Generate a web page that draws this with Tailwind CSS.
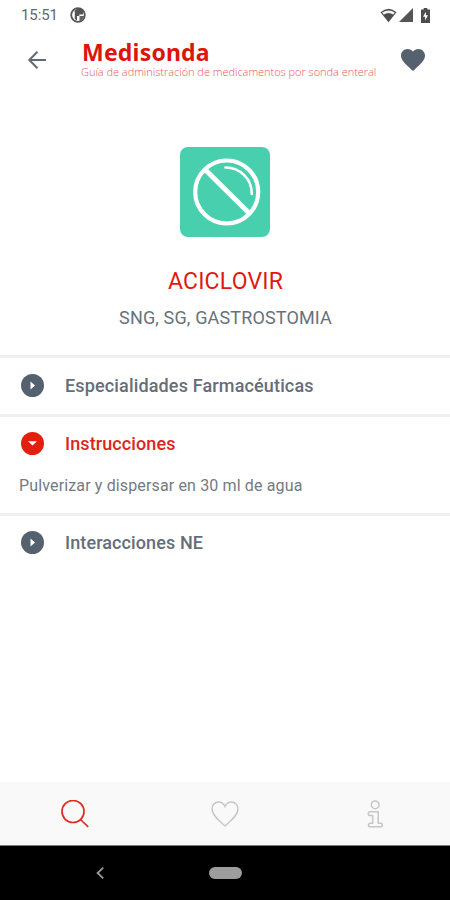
<!DOCTYPE html>
<html lang="es">
<head>
    <meta charset="UTF-8">
    <meta name="viewport" content="width=device-width, initial-scale=1.0">
    <title>Medisonda</title>
    <script src="https://cdn.jsdelivr.net/npm/@tailwindcss/browser@4"></script>
</head>
<body class="bg-white font-['Roboto',sans-serif]">
    <div class="w-[450px] h-[900px] flex flex-col overflow-hidden">
        <!-- Status bar -->
        <div class="h-[30px] shrink-0 flex items-center pl-[21px] pr-[20px] text-[#666]">
            <span class="text-[15px] leading-[30px] tracking-[-0.1px] w-[49px]">15:51</span>
            <svg class="w-4 h-4" viewBox="0 0 16 16">
                <circle cx="8" cy="8" r="6.8" fill="#fff" stroke="#555" stroke-width="1.8"/>
                <path d="M3.6 4.2L7 2h6v5.6H9.3V9H7v4.6L4.8 12V4.2z" fill="#555"/>
                <path d="M9.5 9h4.8A6.5 6.5 0 0 1 9.5 14.4z" fill="#666"/>
            </svg>
            <div class="ml-auto flex items-center">
                <svg class="w-[17px] h-[15px]" viewBox="0 0 17 15">
                    <path d="M0.5 4.3Q8.5 -2.8 16.5 4.3L8.5 14.2z" fill="#4d4d4d"/>
                    <path d="M2.2 4.6Q8.5 0.4 14.8 4.6L13.2 6.6Q8.5 3.4 3.8 6.6z" fill="#f2f2f2"/>
                </svg>
                <svg class="w-[14px] h-[14px] ml-[2px]" viewBox="0 0 14 14">
                    <path d="M14 0v14H0z" fill="#555"/>
                </svg>
                <svg class="w-[9px] h-[15px] ml-2" viewBox="0 0 9 15">
                    <path d="M2.7 0h3.6v1.6H9V15H0V1.6h2.7z" fill="#4d4d4d"/>
                    <path d="M4.9 3.8v3.5H7L4.1 12.4V8.8H2z" fill="#fff"/>
                </svg>
            </div>
        </div>

        <!-- Header -->
        <header class="h-[60px] shrink-0 flex items-center pl-[27px] pr-[25px]">
            <svg class="w-5 h-5" viewBox="0 0 20 20" fill="none" stroke="#626a75" stroke-width="2">
                <path d="M19 10H3M10.5 1.8L2.3 10l8.2 8.2"/>
            </svg>
            <div class="ml-[35px] h-[60px] flex flex-col pt-[11px]">
                <span class="font-['Noto_Sans',sans-serif] font-bold text-[23px] leading-[23px] tracking-[0.2px] text-[#dd130c]">Medisonda</span>
                <span class="-ml-px font-['Open_Sans',sans-serif] font-light text-[11px] leading-[14px] tracking-[-0.03px] pt-[1px] whitespace-nowrap text-[#ec5555]">Guía de administración de medicamentos por sonda enteral</span>
            </div>
            <svg class="w-6 h-[22px] ml-auto shrink-0" viewBox="2 3 20 18.35" preserveAspectRatio="none">
                <path d="M12 21.35l-1.45-1.32C5.4 15.36 2 12.28 2 8.5 2 5.42 4.42 3 7.5 3c1.74 0 3.41.81 4.5 2.09C13.09 3.81 14.76 3 16.5 3 19.58 3 22 5.42 22 8.5c0 3.78-3.4 6.86-8.55 11.54L12 21.35z" fill="#566170"/>
            </svg>
        </header>

        <!-- Drug summary -->
        <section class="h-[265px] shrink-0 flex flex-col items-center pt-[57px]">
            <svg class="w-[90px] h-[90px]" viewBox="0 0 90 90" fill="none" stroke="#fff">
                <rect width="90" height="90" rx="8" fill="#48cfae" stroke="none"/>
                <circle cx="46.7" cy="45" r="31.5" stroke-width="4.2"/>
                <path d="M25 22.5L69 66" stroke-width="5"/>
                <path d="M45.5 20.5C60 20.5 72 32 71.8 47" stroke-width="2.6" stroke-linecap="round"/>
            </svg>
            <h1 class="mt-[32px] ml-[1px] text-[23px] leading-[26px] tracking-[0.2px] text-[#df1a12]">ACICLOVIR</h1>
            <p class="mt-[12px] ml-[1px] text-[18px] leading-[22px] tracking-[0.15px] text-[#69717c]">SNG, SG, GASTROSTOMIA</p>
        </section>

        <!-- Accordion -->
        <main class="flex-1">
            <div class="h-[59px] border-t-[3px] border-[#f0f0f0] flex items-center pl-[21px] pb-[2px]">
                <svg class="w-[23px] h-[23px]" viewBox="0 0 23 23">
                    <circle cx="11.5" cy="11.5" r="11.5" fill="#566170"/>
                    <path d="M9.5 7.5l4.5 4-4.5 4z" fill="#fff"/>
                </svg>
                <h2 class="ml-[21px] text-[18px] font-medium tracking-[0.15px] text-[#666d79]">Especialidades Farmacéuticas</h2>
            </div>
            <div class="h-[99px] border-t-[3px] border-[#f0f0f0]">
                <div class="h-[54px] flex items-center pl-[21px] pb-[2px]">
                    <svg class="w-[23px] h-[23px]" viewBox="0 0 23 23">
                        <circle cx="11.5" cy="11.5" r="11.5" fill="#e3200f"/>
                        <path d="M7 9.2h9l-4.5 4.3z" fill="#fff"/>
                    </svg>
                    <h2 class="ml-[21px] text-[18px] font-medium tracking-[0.1px] text-[#e0241b]">Instrucciones</h2>
                </div>
                <p class="pl-[19px] pt-[4px] text-[16px] leading-[22px] tracking-[0.14px] text-[#737a84]">Pulverizar y dispersar en 30 ml de agua</p>
            </div>
            <div class="h-[59px] border-t-[3px] border-[#f0f0f0] flex items-center pl-[21px] pb-[3px]">
                <svg class="w-[23px] h-[23px]" viewBox="0 0 23 23">
                    <circle cx="11.5" cy="11.5" r="11.5" fill="#566170"/>
                    <path d="M9.5 7.5l4.5 4-4.5 4z" fill="#fff"/>
                </svg>
                <h2 class="ml-[21px] text-[18px] font-medium tracking-[0.1px] text-[#666d79]">Interacciones NE</h2>
            </div>
        </main>

        <!-- Tab bar -->
        <nav class="h-[64px] shrink-0 grid grid-cols-3 place-items-center bg-[#f9f9f9] border-b border-[#7c7c7c]">
            <svg class="w-7 h-7" viewBox="0 0 28 28" fill="none" stroke="#e02a22" stroke-width="1.7">
                <circle cx="12" cy="11.5" r="11"/>
                <path d="M19.5 19.5l7.7 7.3"/>
            </svg>
            <svg class="w-7 h-[26px]" viewBox="0 0 28 26" fill="none" stroke="#c6c6c6" stroke-width="1.4">
                <path d="M14 25C9 20.5 1 14.5 1 7.8C1 4 4 1 7.5 1C10.5 1 12.8 2.8 14 5.5C15.2 2.8 17.5 1 20.5 1C24 1 27 4 27 7.8C27 14.5 19 20.5 14 25z"/>
            </svg>
            <svg class="w-4 h-7" viewBox="0 0 16 28" fill="none" stroke="#c6c6c6" stroke-width="1.5" stroke-linejoin="round">
                <circle cx="8.2" cy="4.8" r="3.9"/>
                <path d="M3.2 11.8h8v11.4h2.3a1.8 1.8 0 0 1 0 3.6H3.3a1.8 1.8 0 0 1 0-3.6h2.4v-7.6H3.2a1.9 1.9 0 0 1 0-3.8z"/>
            </svg>
        </nav>

        <!-- System navigation -->
        <div class="h-[54px] shrink-0 bg-black flex items-center pl-[96px]">
            <svg class="w-2 h-3" viewBox="0 0 8 12" fill="none" stroke="#9a9a9a" stroke-width="1.8">
                <path d="M7.2 0.7L1.6 6l5.6 5.3"/>
            </svg>
            <div class="ml-[105px] w-[33px] h-3 rounded-full bg-[#9d9d9d]"></div>
        </div>
    </div>
</body>
</html>
